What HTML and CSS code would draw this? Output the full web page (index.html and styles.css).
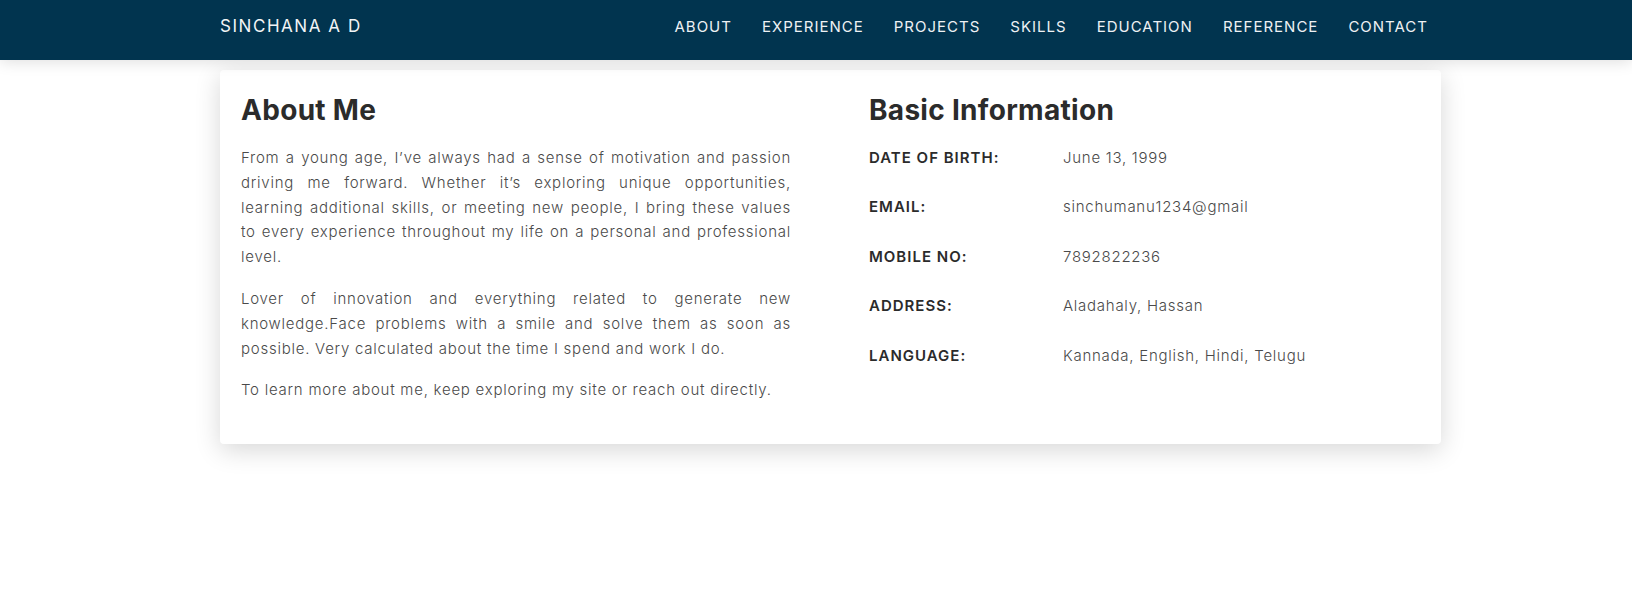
FILE: index.html
```html
<!DOCTYPE html>
<html lang="en">
<head>
<meta charset="utf-8">
<title>Sinchana A D</title>
<link rel="stylesheet" href="styles.css">
</head>
<body>
<header class="topbar">
  <div class="topbar-inner">
    <a class="brand" href="#">SINCHANA A D</a>
    <nav class="nav">
      <a href="#">ABOUT</a>
      <a href="#">EXPERIENCE</a>
      <a href="#">PROJECTS</a>
      <a href="#">SKILLS</a>
      <a href="#">EDUCATION</a>
      <a href="#">REFERENCE</a>
      <a href="#">CONTACT</a>
    </nav>
  </div>
</header>
<main class="page">
  <section class="card">
    <div class="col-about">
      <h2 class="title">About Me</h2>
      <p class="text">From a young age, I’ve always had a sense of motivation and passion driving me forward. Whether it’s exploring unique opportunities, learning additional skills, or meeting new people, I bring these values to every experience throughout my life on a personal and professional level.</p>
      <p class="text">Lover of innovation and everything related to generate new knowledge.Face problems with a smile and solve them as soon as possible. Very calculated about the time I spend and work I do.</p>
      <p class="text">To learn more about me, keep exploring my site or reach out directly.</p>
    </div>
    <div class="col-info">
      <h2 class="title">Basic Information</h2>
      <div class="info-row"><span class="label">DATE OF BIRTH:</span><span class="value">June 13, 1999</span></div>
      <div class="info-row"><span class="label">EMAIL:</span><span class="value">sinchumanu1234@gmail</span></div>
      <div class="info-row"><span class="label">MOBILE NO:</span><span class="value">7892822236</span></div>
      <div class="info-row"><span class="label">ADDRESS:</span><span class="value">Aladahaly, Hassan</span></div>
      <div class="info-row"><span class="label">LANGUAGE:</span><span class="value">Kannada, English, Hindi, Telugu</span></div>
    </div>
  </section>
</main>
</body>
</html>
```
FILE: styles.css
```css
* { box-sizing: border-box; }
html, body { margin: 0; padding: 0; background: #ffffff; }
body { font-family: Inter, "Noto Sans", "Liberation Sans", sans-serif; color: #333; }

.topbar {
  height: 60px;
  background: #01344f;
  box-shadow: 0 2px 14px rgba(0, 0, 0, 0.13);
  position: relative;
  z-index: 2;
}
.topbar-inner {
  width: 1221px;
  margin-left: 220px;
  height: 60px;
  display: flex;
  align-items: center;
  justify-content: space-between;
  padding-bottom: 8px;
}
.brand {
  color: #f2f4f6;
  text-decoration: none;
  font-size: 17px;
  letter-spacing: 1.55px;
  font-weight: 400;
}
.nav { display: flex; gap: 30px; padding-right: 13px; }
.nav a {
  color: #eef1f4;
  text-decoration: none;
  font-size: 15px;
  letter-spacing: 1px;
}

.page { padding-top: 10px; padding-bottom: 40px; }
.card {
  width: 1221px;
  margin-left: 220px;
  background: #fff;
  border-radius: 4px;
  box-shadow: 0 6px 26px rgba(0, 0, 0, 0.16);
  padding: 23px 21px 24px;
  display: grid;
  grid-template-columns: 550px 1fr;
  column-gap: 78px;
}
.title {
  margin: 0 0 19px;
  font-size: 28px;
  line-height: 34px;
  font-weight: 700;
  color: #2b2b2b;
  letter-spacing: 0.3px;
}
.text {
  margin: 0 0 17px;
  font-size: 15px;
  line-height: 24.8px;
  font-weight: 300;
  color: #4a4a4a;
  text-align: justify;
  letter-spacing: 0.75px;
}
.info-row {
  display: flex;
  font-size: 15px;
  line-height: 24.8px;
  margin-bottom: 24.6px;
}
.label {
  width: 194px;
  flex: none;
  font-weight: 600;
  color: #2b2b2b;
  letter-spacing: 1px;
}
.value { font-weight: 300; color: #4a4a4a; letter-spacing: 0.74px; }
```
